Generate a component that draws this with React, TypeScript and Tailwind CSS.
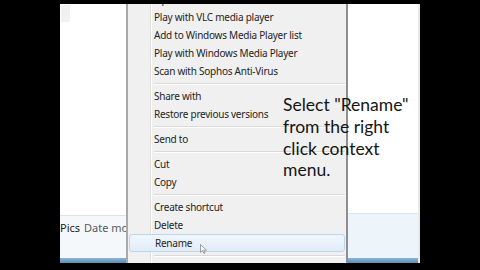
type MenuEntry = { label: string } | { separator: true }

const menuEntries: MenuEntry[] = [
  { label: 'Open with' },
  { label: 'Play with VLC media player' },
  { label: 'Add to Windows Media Player list' },
  { label: 'Play with Windows Media Player' },
  { label: 'Scan with Sophos Anti-Virus' },
  { separator: true },
  { label: 'Share with' },
  { label: 'Restore previous versions' },
  { separator: true },
  { label: 'Send to' },
  { separator: true },
  { label: 'Cut' },
  { label: 'Copy' },
  { separator: true },
  { label: 'Create shortcut' },
  { label: 'Delete' },
  { label: 'Rename' },
  { separator: true },
  { label: 'Properties' },
]

const HIGHLIGHTED = 'Rename'

function MenuItem({ label }: { label: string }) {
  if (label === HIGHLIGHTED) {
    return (
      <div className="mx-px flex h-[18px] items-center rounded-[3px] border border-[#bcd4ee] bg-gradient-to-b from-[#f0f6fd] to-[#e1ecf8] pl-[25px]">
        <span className="whitespace-nowrap">{label}</span>
      </div>
    )
  }
  return (
    <div className="flex h-[18px] items-stretch">
      <div className="w-[23px] shrink-0 border-r border-[#dedede]" />
      <div className="w-px shrink-0 bg-white" />
      <div className="flex items-center whitespace-nowrap pl-[2px]">{label}</div>
    </div>
  )
}

function MenuSeparator() {
  return (
    <div className="flex h-[7px] items-stretch">
      <div className="w-[23px] shrink-0 border-r border-[#dedede]" />
      <div className="w-px shrink-0 bg-white" />
      <div className="flex flex-1 flex-col justify-center pl-[2px] pr-px">
        <div className="h-px bg-[#d9d9d9]" />
        <div className="h-px bg-white" />
      </div>
    </div>
  )
}

function ContextMenu() {
  return (
    <div className="w-[222px] shrink-0 overflow-hidden border-x-2 border-l-[#a9a9a9] border-r-[#8e8e8e] bg-[#f0f0f0] text-[10px] tracking-[-0.25px] text-[#242424] [font-family:'Noto_Sans',sans-serif]">
      <div className="-mt-[14px]">
        {menuEntries.map((entry, i) =>
          'separator' in entry ? <MenuSeparator key={i} /> : <MenuItem key={i} label={entry.label} />,
        )}
      </div>
    </div>
  )
}

function Cursor() {
  return (
    <svg width="7" height="10" viewBox="0 0 7 10" className="absolute left-[140px] top-[240px]">
      <path d="M0.5 0.5 L0.5 8.5 L2.5 6.5 L4 9.5 L5 9 L3.8 6.2 L6.5 6.2 Z" fill="#f4f4f4" stroke="#8a8a8a" strokeWidth="0.8" />
    </svg>
  )
}

export default function App() {
  return (
    <div className="h-[270px] w-[480px] overflow-hidden bg-black pl-[60px] pt-[4px]">
      <div className="relative flex h-[259px] w-[360px] overflow-hidden">
        {/* left explorer pane */}
        <div className="flex w-[66px] shrink-0 flex-col">
          <div className="h-[211px] bg-white pl-px pt-px">
            <div className="h-[17px] w-[9px] bg-[#f1f1f1]" />
          </div>
          <div className="h-px bg-[#dde2e8]" />
          <div className="h-[42px] overflow-hidden whitespace-nowrap bg-[#f4f8fb] pt-[5px] text-[11px] leading-[14px] [font-family:'Noto_Sans',sans-serif]">
            <span className="text-[#1a1a1a]">Pics</span>
            <span className="ml-[4px] text-[#5a5a5a]">Date modified</span>
          </div>
          <div className="h-[5px] bg-gradient-to-b from-[#8db6d6] to-[#5a8db5]" />
        </div>

        <ContextMenu />

        {/* right explorer pane */}
        <div className="flex w-[72px] shrink-0 flex-col border-r-2 border-[#e9e9e9]">
          <div className="h-[209px] bg-white" />
          <div className="h-px bg-[#dde3e9]" />
          <div className="h-[44px] bg-[#eef5fa]" />
          <div className="h-[5px] bg-gradient-to-b from-[#8db6d6] to-[#5a8db5]" />
        </div>

        {/* caption overlay */}
        <p className="absolute left-[223px] top-[90px] text-[17.5px] leading-[21.8px] text-[#151515] [font-family:Lato,sans-serif]">
          Select "Rename"
          <br />
          from the right
          <br />
          click context
          <br />
          menu.
        </p>

        <Cursor />
      </div>
    </div>
  )
}
